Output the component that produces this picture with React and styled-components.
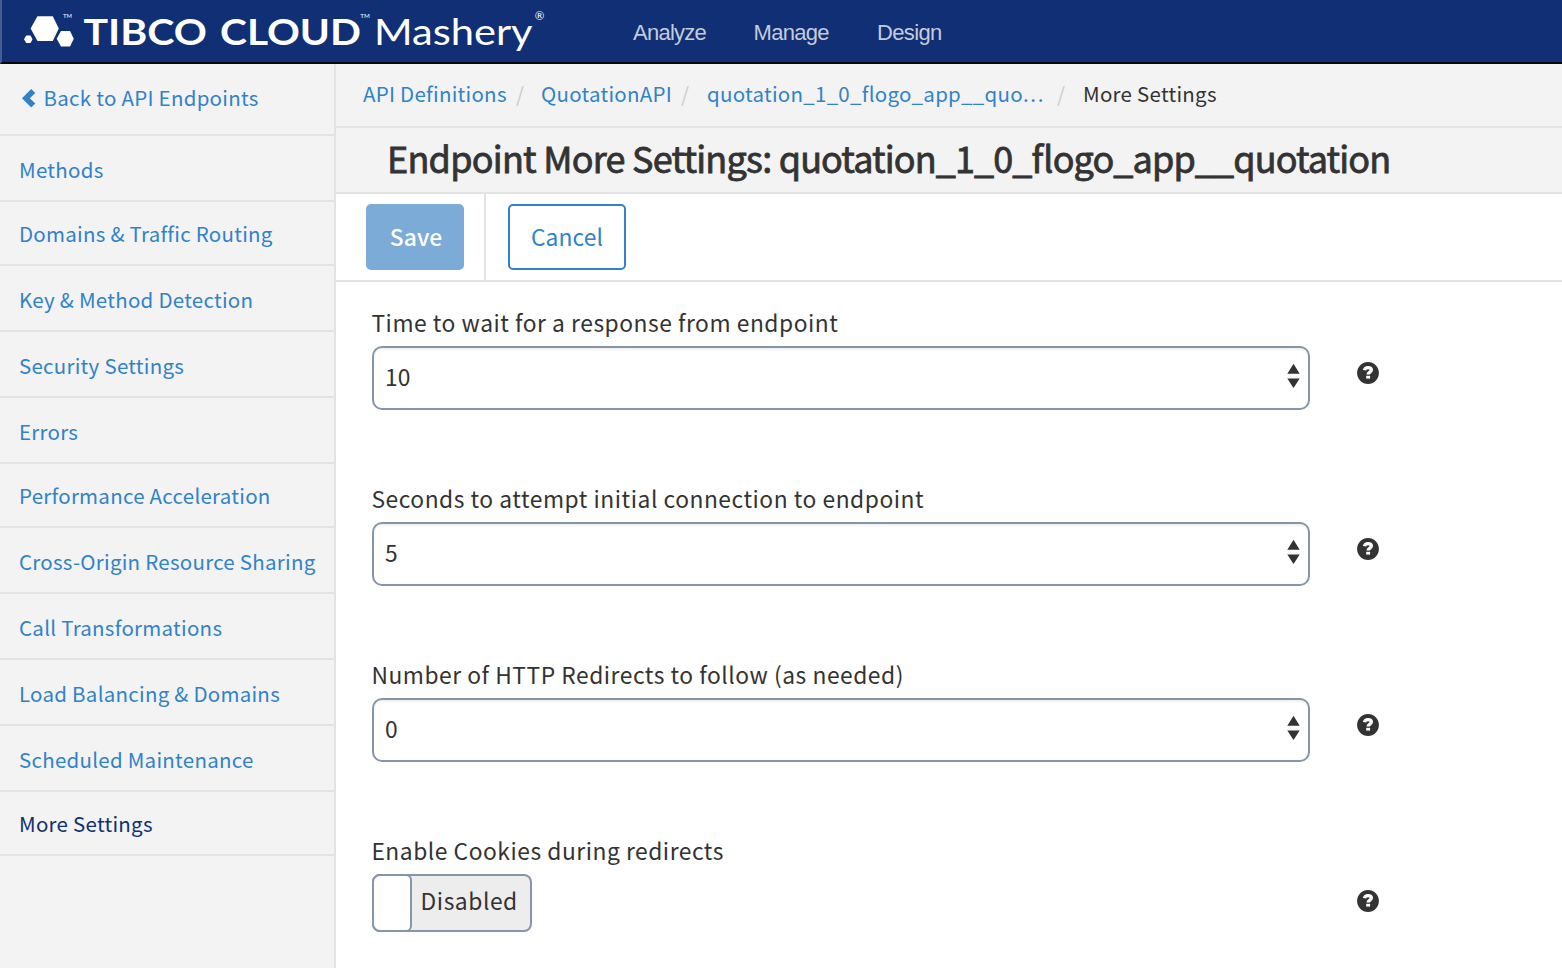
import React from 'react';
import styled, { createGlobalStyle } from 'styled-components';

const GlobalStyle = createGlobalStyle`
  *, *::before, *::after { box-sizing: border-box; }
  html, body { margin: 0; padding: 0; height: 100%; overflow: hidden; }
  body {
    background: #fff;
    color: #333;
    font-family: "Noto Sans CJK SC", "Noto Sans", sans-serif;
    -webkit-font-smoothing: antialiased;
  }
`;

const Page = styled.div`
  display: flex;
  flex-direction: column;
  height: 968px;
  overflow: hidden;
`;

const Header = styled.header`
  flex: none;
  display: flex;
  height: 64px;
  background: #102f74;
  border-bottom: 2px solid #050608;
  border-left: 2px solid #455d92;
`;

const LogoSvg = styled.svg`
  flex: none;
  display: block;
  width: 600px;
  height: 62px;
`;

const TopNav = styled.nav`
  display: flex;
  gap: 48px;
  padding-left: 31px;
`;

const TopLink = styled.a`
  width: ${(p) => p.$w}px;
  white-space: nowrap;
  font: 22px/65px "Liberation Sans", sans-serif;
  letter-spacing: ${(p) => p.$ls}px;
  color: #c5cbdb;
`;

const Body = styled.div`
  flex: 1;
  display: flex;
  min-height: 0;
`;

const Sidebar = styled.aside`
  flex: none;
  width: 336px;
  background: #f3f3f3;
  border-right: 2px solid #e3e3e3;
`;

const SideItem = styled.a`
  display: flex;
  align-items: center;
  height: ${(p) => p.$h}px;
  padding: ${(p) => (p.$h === 64 ? 0 : 2)}px 0 0 19px;
  border-bottom: 2px solid #e3e3e3;
  font-size: 20.5px;
  line-height: 30px;
  letter-spacing: 0.26px;
  white-space: nowrap;
  color: ${(p) => (p.$active ? '#102f74' : '#3182c8')};
`;

const BackItem = styled(SideItem)`
  padding: 0 0 4px 22px;
  gap: 7.6px;
`;

const Main = styled.main`
  flex: 1;
  min-width: 0;
`;

const Breadcrumb = styled.div`
  display: flex;
  align-items: center;
  height: 64px;
  padding: 0 0 4px 27px;
  background: #f3f3f3;
  border-bottom: 2px solid #e3e3e3;
  font-size: 20.5px;
  line-height: 30px;
  white-space: nowrap;
`;

const Crumb = styled.span`
  width: ${(p) => p.$w}px;
  letter-spacing: 0.26px;
  color: ${(p) => (p.$current ? '#333' : '#3182c8')};
`;

const Dots = styled.span`
  letter-spacing: 1.8px;
`;

const Slash = styled.span`
  width: ${(p) => p.$w}px;
  padding-left: ${(p) => p.$pad}px;
  color: #ccc;
`;

const Title = styled.h1`
  margin: 0;
  height: 66px;
  padding-left: 51px;
  background: #f3f3f3;
  border-bottom: 2px solid #e3e3e3;
  font-size: 36px;
  font-weight: 400;
  font-feature-settings: "liga" 1;
  letter-spacing: -0.77px;
  -webkit-text-stroke: 0.8px #333;
  line-height: 58px;
  white-space: nowrap;
`;

const TitleName = styled.span`
  letter-spacing: -0.89px;
`;

const Toolbar = styled.div`
  display: flex;
  height: 88px;
  border-bottom: 2px solid #e3e3e3;
`;

const ToolCell = styled.div`
  display: flex;
  align-items: center;
  width: ${(p) => p.$w}px;
  padding: 0 0 0 ${(p) => p.$pad}px;
  border-right: ${(p) => (p.$divided ? '2px solid #e3e3e3' : '0')};
`;

const Button = styled.button`
  width: ${(p) => p.$w}px;
  height: 66px;
  margin: 0;
  padding: 0 0 2px ${(p) => (p.$primary ? 2 : 0)}px;
  border: 2px solid ${(p) => (p.$primary ? '#7dabd8' : '#3182c8')};
  border-radius: 5px;
  background: ${(p) => (p.$primary ? '#7dabd8' : '#fff')};
  color: ${(p) => (p.$primary ? '#fff' : '#3182c8')};
  font-family: inherit;
  font-size: 22.8px;
  font-weight: ${(p) => (p.$primary ? 500 : 400)};
  letter-spacing: 0.1px;
`;

const Form = styled.form`
  padding: 16px 0 0 36px;
`;

const Field = styled.div`
  height: 176px;
`;

const Label = styled.label`
  display: block;
  height: 48px;
  margin-left: -0.6px;
  font-size: 22.8px;
  line-height: 50px;
  letter-spacing: 0.53px;
  white-space: nowrap;
`;

const FieldRow = styled.div`
  display: flex;
  align-items: flex-start;
`;

const ControlCell = styled.div`
  width: 985px;
`;

const SelectBox = styled.div`
  display: flex;
  justify-content: space-between;
  align-items: center;
  width: 938px;
  height: 64px;
  padding: 0 8px 2px 11px;
  border: 2px solid #8795ac;
  border-radius: 10px;
  box-shadow: inset 0 2px 2px rgba(0, 0, 0, 0.06);
  font-size: 22.8px;
  line-height: 34px;
  letter-spacing: 0.2px;
`;

const Toggle = styled.div`
  display: flex;
  width: 160px;
  height: 58px;
  border: 2px solid #8795ac;
  border-radius: 8px;
  background: #ededed;
  font-size: 22.8px;
  line-height: 50px;
  letter-spacing: 0.55px;
`;

const Knob = styled.div`
  flex: none;
  width: 40px;
  margin: -2px 8.6px -2px -2px;
  border: 2px solid #8795ac;
  border-radius: 8px 6px 6px 8px;
  background: #fff;
`;

const HelpIcon = styled.svg`
  display: block;
  width: 22px;
  height: 22px;
  margin-top: 16px;
`;

const ArrowsSvg = styled.svg`
  display: block;
  width: 13px;
  height: 26px;
  margin-bottom: 2px;
`;

const Logo = () => (
  <LogoSvg viewBox="2 0 600 62" fill="#fff">
    <polygon points="37.5,16.2 52.8,16.2 58.8,28.6 52.8,41 37.5,41 30.6,28.6" />
    <polygon points="61,31 70,31 73.8,38.7 70,46.4 61,46.4 56.7,38.7" />
    <polygon points="26.2,35.6 30.5,35.6 32.5,39.3 30.5,43 26.2,43 24,39.3" />
    <g fontFamily="Lato, sans-serif">
      <text x="63" y="17.6" fontSize="6" textLength="9" lengthAdjust="spacingAndGlyphs">TM</text>
      <text x="83.5" y="45" fontSize="36.8" fontWeight="700" textLength="123.5" lengthAdjust="spacingAndGlyphs">TIBCO</text>
      <text x="220" y="45" fontSize="36.8" fontWeight="700" textLength="141" lengthAdjust="spacingAndGlyphs">CLOUD</text>
      <text x="360.3" y="17.6" fontSize="6" textLength="9.5" lengthAdjust="spacingAndGlyphs">TM</text>
      <text x="374" y="45" fontSize="36.8" textLength="158.5" lengthAdjust="spacingAndGlyphs">Mashery</text>
      <text x="534.8" y="20" fontSize="11.5">®</text>
    </g>
  </LogoSvg>
);

const Chevron = () => (
  <svg width="14" height="22" viewBox="0 0 14 22" fill="#3182c8">
    <path d="M0 12.2 9.2 2.9 13.3 6.9 7.8 12.2 13.3 17.5 9.2 21.5Z" />
  </svg>
);

const Arrows = () => (
  <ArrowsSvg viewBox="0 0 13 26" fill="#333">
    <path d="M0.3 10.7 6.5.8 12.7 10.7ZM0.3 15.6H12.7L6.5 25Z" />
  </ArrowsSvg>
);

const Help = () => (
  <HelpIcon viewBox="0 0 22 22">
    <circle cx="11" cy="11" r="10.9" fill="#333" />
    <path d="M7.6 8.2C7.9 6.3 9.2 5.6 11.1 5.6C13.1 5.6 14.3 6.5 14.3 8C14.3 10.1 11.2 10 11.2 12.5" fill="none" stroke="#fff" strokeWidth="3.4" />
    <rect x="9.2" y="13.8" width="3.9" height="2.8" fill="#fff" />
  </HelpIcon>
);

const menu = [
  { text: 'Methods', h: 66 },
  { text: 'Domains & Traffic Routing', h: 64 },
  { text: 'Key & Method Detection', h: 66 },
  { text: 'Security Settings', h: 66 },
  { text: 'Errors', h: 66 },
  { text: 'Performance Acceleration', h: 64 },
  { text: 'Cross-Origin Resource Sharing', h: 66 },
  { text: 'Call Transformations', h: 66 },
  { text: 'Load Balancing & Domains', h: 66 },
  { text: 'Scheduled Maintenance', h: 66 },
  { text: 'More Settings', h: 64, active: true },
];

const fields = [
  { label: 'Time to wait for a response from endpoint', value: '10' },
  { label: 'Seconds to attempt initial connection to endpoint', value: '5' },
  { label: 'Number of HTTP Redirects to follow (as needed)', value: '0' },
];

export default function App() {
  return (
    <Page>
      <GlobalStyle />
      <Header>
        <Logo />
        <TopNav>
          <TopLink $w={72.5} $ls={-0.75}>Analyze</TopLink>
          <TopLink $w={75.5} $ls={-0.7}>Manage</TopLink>
          <TopLink $w={65} $ls={-0.65}>Design</TopLink>
        </TopNav>
      </Header>
      <Body>
        <Sidebar>
          <BackItem $h={72}>
            <Chevron />
            Back to API Endpoints
          </BackItem>
          {menu.map((m) => (
            <SideItem key={m.text} $h={m.h} $active={m.active}>{m.text}</SideItem>
          ))}
        </Sidebar>
        <Main>
          <Breadcrumb>
            <Crumb $w={144}>API Definitions</Crumb>
            <Slash $w={34} $pad={9}>/</Slash>
            <Crumb $w={131}>QuotationAPI</Crumb>
            <Slash $w={35} $pad={9}>/</Slash>
            <Crumb $w={337}>quotation_1_0_flogo_app__quo<Dots>...</Dots></Crumb>
            <Slash $w={39} $pad={13}>/</Slash>
            <Crumb $w={140} $current>More Settings</Crumb>
          </Breadcrumb>
          <Title>
            Endpoint More Settings: <TitleName>quotation_1_0_flogo_app__quotation</TitleName>
          </Title>
          <Toolbar>
            <ToolCell $w={150} $pad={30} $divided>
              <Button type="button" $w={98} $primary>Save</Button>
            </ToolCell>
            <ToolCell $w={160} $pad={22}>
              <Button type="button" $w={118}>Cancel</Button>
            </ToolCell>
          </Toolbar>
          <Form>
            {fields.map((f) => (
              <Field key={f.label}>
                <Label>{f.label}</Label>
                <FieldRow>
                  <ControlCell>
                    <SelectBox>
                      {f.value}
                      <Arrows />
                    </SelectBox>
                  </ControlCell>
                  <Help />
                </FieldRow>
              </Field>
            ))}
            <Field>
              <Label>Enable Cookies during redirects</Label>
              <FieldRow>
                <ControlCell>
                  <Toggle>
                    <Knob />
                    Disabled
                  </Toggle>
                </ControlCell>
                <Help />
              </FieldRow>
            </Field>
          </Form>
        </Main>
      </Body>
    </Page>
  );
}
